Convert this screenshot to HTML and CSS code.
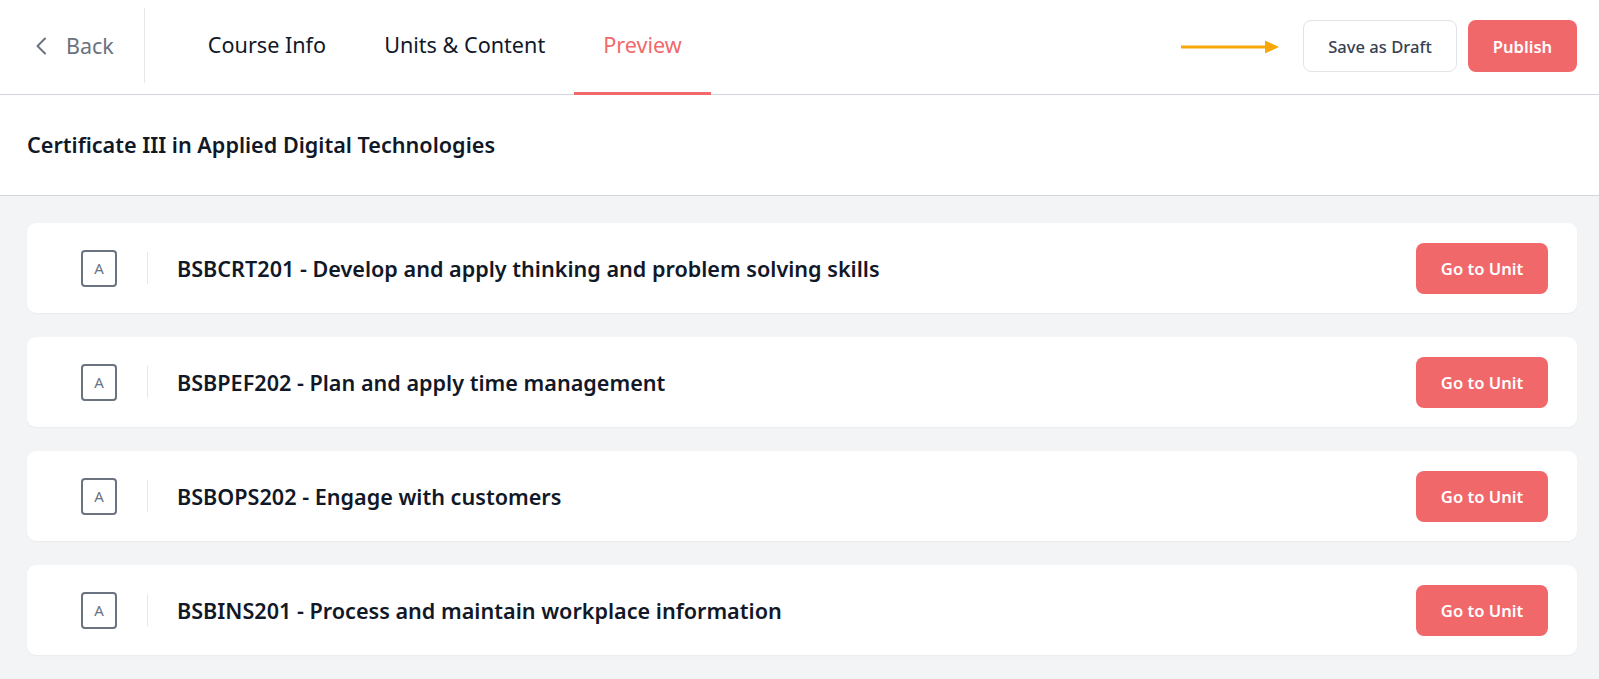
FILE: index.html
```html
<!DOCTYPE html>
<html lang="en">
<head>
<meta charset="utf-8">
<title>Preview</title>
<link rel="stylesheet" href="styles.css">
</head>
<body>
<header class="topbar">
  <div class="left">
    <a class="back">
      <svg class="chev" width="12" height="18" viewBox="0 0 12 18"><path d="M10 1.5 L2.5 9 L10 16.5" fill="none" stroke="#6B7280" stroke-width="2" stroke-linecap="round" stroke-linejoin="round"/></svg>
      <span>Back</span>
    </a>
    <div class="vdiv"></div>
    <nav class="tabs">
      <a class="tab">Course Info</a>
      <a class="tab">Units &amp; Content</a>
      <a class="tab active">Preview</a>
    </nav>
  </div>
  <div class="right">
    <svg class="arrow" width="98" height="16" viewBox="0 0 98 16"><line x1="0" y1="8" x2="86" y2="8" stroke="#F6A70C" stroke-width="3"/><path d="M84 1.5 L98 8 L84 14.5 Z" fill="#F6A70C"/></svg>
    <button class="btn draft">Save as Draft</button>
    <button class="btn publish">Publish</button>
  </div>
</header>
<section class="course-title">Certificate III in Applied Digital Technologies</section>
<main class="units">
  <div class="card">
    <div class="badge">A</div>
    <div class="cdiv"></div>
    <div class="unit-name">BSBCRT201 - Develop and apply thinking and problem solving skills</div>
    <button class="btn go">Go to Unit</button>
  </div>
  <div class="card">
    <div class="badge">A</div>
    <div class="cdiv"></div>
    <div class="unit-name">BSBPEF202 - Plan and apply time management</div>
    <button class="btn go">Go to Unit</button>
  </div>
  <div class="card">
    <div class="badge">A</div>
    <div class="cdiv"></div>
    <div class="unit-name">BSBOPS202 - Engage with customers</div>
    <button class="btn go">Go to Unit</button>
  </div>
  <div class="card">
    <div class="badge">A</div>
    <div class="cdiv"></div>
    <div class="unit-name">BSBINS201 - Process and maintain workplace information</div>
    <button class="btn go">Go to Unit</button>
  </div>
</main>
</body>
</html>
```
FILE: styles.css
```css
* { box-sizing: border-box; }
html, body { margin: 0; padding: 0; }
body {
  font-family: "Noto Sans", "Open Sans", sans-serif;
  background: #F3F4F6;
  color: #111827;
  min-height: 679px;
}
.topbar {
  height: 95px;
  background: #fff;
  border-bottom: 1px solid #D4D6DE;
  display: flex;
  align-items: stretch;
  justify-content: space-between;
  padding: 0 22px 0 35px;
}
.left { display: flex; align-items: stretch; }
.back {
  display: flex;
  align-items: center;
  gap: 19px;
  color: #6B7280;
  font-size: 21.5px;
  padding-bottom: 3px;
}
.chev { display: block; }
.vdiv {
  width: 1px;
  background: #E5E7EB;
  margin: 8px 34px 11px 30px;
}
.tabs { display: flex; align-items: stretch; }
.tab {
  display: flex;
  align-items: center;
  padding: 0 29px 3px;
  font-size: 21.6px;
  color: #111827;
  border-bottom: 3px solid transparent;
  margin-bottom: -1px;
}
.tab.active {
  color: #F06A6C;
  border-bottom-color: #F06A6C;
}
.right {
  display: flex;
  align-items: center;
  padding-bottom: 2px;
}
.arrow { display: block; margin-right: 24px; margin-top: 1px; }
.btn {
  font-family: inherit;
  border-radius: 8px;
  font-size: 16.6px;
  cursor: pointer;
}
.draft {
  width: 154px;
  height: 52px;
  background: #fff;
  border: 1px solid #E2E4E8;
  color: #374151;
  font-weight: 500;
  margin-right: 11px;
}
.publish {
  width: 109px;
  height: 52px;
  background: #F1686B;
  border: none;
  color: #fff;
  font-weight: 600;
}
.course-title {
  height: 101px;
  background: #fff;
  border-bottom: 1px solid #D4D6DE;
  display: flex;
  align-items: center;
  padding: 0 27px 2px;
  font-size: 21.6px;
  font-weight: 600;
}
.units {
  padding: 27px 22px 24px 27px;
  display: flex;
  flex-direction: column;
  gap: 24px;
}
.card {
  height: 90px;
  background: #fff;
  border-radius: 9px;
  box-shadow: 0 1px 2px rgba(0,0,0,0.04);
  display: flex;
  align-items: center;
  padding: 0 29px 0 54px;
}
.badge {
  width: 36px;
  height: 37px;
  border: 2px solid #6B7280;
  border-radius: 4px;
  display: flex;
  align-items: center;
  justify-content: center;
  font-size: 15px;
  color: #6B7280;
  flex: none;
}
.cdiv {
  width: 1px;
  height: 32px;
  background: #E5E7EB;
  margin: 0 29px 0 30px;
  flex: none;
}
.unit-name {
  flex: 1;
  font-size: 21.6px;
  font-weight: 600;
  color: #111827;
}
.go {
  width: 132px;
  height: 51px;
  background: #F1686B;
  border: none;
  color: #fff;
  font-weight: 600;
  flex: none;
}
```
